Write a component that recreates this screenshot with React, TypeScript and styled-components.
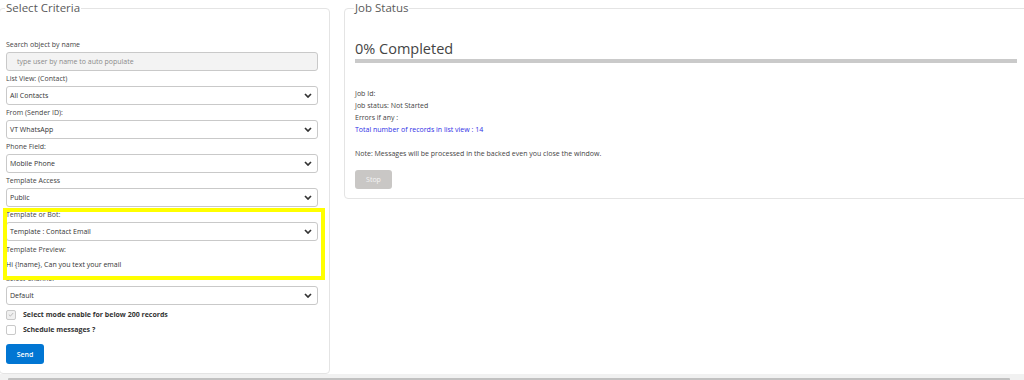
import React from 'react';
import styled, { createGlobalStyle } from 'styled-components';

const GlobalStyle = createGlobalStyle`
  html, body {
    margin: 0;
    padding: 0;
    overflow: hidden;
    background: #ffffff;
  }
  body {
    font-family: "Open Sans", "Noto Sans", sans-serif;
    color: #3e3e3e;
  }
`;

const Page = styled.div`
  width: 1024px;
  height: 380px;
  overflow: hidden;
  padding-top: 1px;
  box-sizing: border-box;
`;

const PanelRow = styled.div`
  display: flex;
  align-items: flex-start;
  gap: 14px;
`;

const Panel = styled.fieldset<{ $width: number; $padLeft: number; $padRight: number }>`
  flex: none;
  width: ${(p) => p.$width}px;
  box-sizing: border-box;
  margin: 0;
  padding: 25px ${(p) => p.$padRight}px 9px ${(p) => p.$padLeft}px;
  border: 1px solid #e4e4e4;
  border-radius: 4px;
  min-width: 0;
`;

const Legend = styled.legend`
  padding: 0 1px;
  margin-left: -1px;
  font-size: 11.5px;
  line-height: 14px;
  color: #5a5a5a;
`;

const Fields = styled.div`
  position: relative;
  display: flex;
  flex-direction: column;
`;

const Label = styled.div<{ $top?: number }>`
  font-size: 7px;
  line-height: 10px;
  height: 10px;
  margin-top: ${(p) => p.$top ?? 3}px;
  margin-bottom: 2px;
  color: #444;
  white-space: nowrap;
`;

const TextInput = styled.div`
  height: 19px;
  box-sizing: border-box;
  border: 1px solid #c9c9c9;
  border-radius: 3px;
  background: #f3f3f3;
  padding-left: 10px;
  display: flex;
  align-items: center;
  font-size: 7px;
  color: #8a8a8a;
`;

const SelectBox = styled.div`
  height: 19px;
  box-sizing: border-box;
  border: 1px solid #c9c9c9;
  border-radius: 3px;
  background: #fff;
  padding: 0 5px 0 3px;
  display: flex;
  align-items: center;
  justify-content: space-between;
  font-size: 7px;
  color: #333;
`;

const PreviewText = styled.div`
  font-size: 7px;
  line-height: 10px;
  margin-top: 3px;
  color: #333;
`;

/* yellow annotation drawn over the form */
const Highlight = styled.div`
  position: absolute;
  left: -3px;
  top: 168px;
  width: 322px;
  height: 72px;
  box-sizing: border-box;
  border: 4px solid #ffff00;
  pointer-events: none;
`;

const CheckRow = styled.div<{ $top?: number }>`
  display: flex;
  align-items: center;
  gap: 7px;
  height: 15px;
  margin-top: ${(p) => p.$top ?? 0}px;
  font-size: 7px;
  font-weight: 700;
  color: #333;
`;

const CheckBox = styled.span<{ $disabled?: boolean }>`
  width: 10px;
  height: 10px;
  box-sizing: border-box;
  border: 1px solid #c9c9c9;
  border-radius: 2px;
  background: ${(p) => (p.$disabled ? '#f0f0f0' : '#fff')};
  display: flex;
  align-items: center;
  justify-content: center;
`;

const Button = styled.div<{ $tone: 'brand' | 'muted'; $width: number; $height: number }>`
  width: ${(p) => p.$width}px;
  height: ${(p) => p.$height}px;
  border-radius: 3px;
  background: ${(p) => (p.$tone === 'brand' ? '#0176d3' : '#c9c7c5')};
  color: ${(p) => (p.$tone === 'brand' ? '#fff' : '#f4f4f4')};
  display: flex;
  align-items: center;
  justify-content: center;
  font-size: 7px;
  font-weight: ${(p) => (p.$tone === 'brand' ? 600 : 400)};
  margin-top: ${(p) => (p.$tone === 'brand' ? 7 : 10)}px;
`;

const Heading = styled.div`
  font-size: 14.5px;
  line-height: 18px;
  color: #444;
`;

const Progress = styled.div`
  height: 4px;
  margin-top: 1px;
  background: #cacaca;
`;

const InfoList = styled.div`
  margin-top: 25px;
  display: flex;
  flex-direction: column;
`;

const InfoLine = styled.div<{ $accent?: boolean }>`
  font-size: 7px;
  line-height: 12px;
  color: ${(p) => (p.$accent ? '#2f2fe6' : '#444')};
`;

const Note = styled.div`
  margin-top: 12px;
  font-size: 7px;
  line-height: 12px;
  color: #444;
`;

const ScrollTrack = styled.div`
  height: 10px;
  background: #f1f1f1;
  padding-top: 4px;
  box-sizing: border-box;
`;

const ScrollThumb = styled.div`
  margin-left: 8px;
  width: 1002px;
  height: 6px;
  background: #c1c1c1;
  border-radius: 1px;
`;

const Chevron = () => (
  <svg width="8" height="5" viewBox="0 0 8 5">
    <path d="M1 1l3 3 3-3" fill="none" stroke="#333" strokeWidth="1.7" />
  </svg>
);

const Tick = () => (
  <svg width="6" height="5" viewBox="0 0 6 5">
    <path d="M0.8 2.6l1.6 1.5L5.2 1" fill="none" stroke="#b5b5b5" strokeWidth="0.9" />
  </svg>
);

const selects = [
  { label: 'List View: (Contact)', value: 'All Contacts' },
  { label: 'From (Sender ID):', value: 'VT WhatsApp' },
  { label: 'Phone Field:', value: 'Mobile Phone' },
  { label: 'Template Access', value: 'Public' },
  { label: 'Template or Bot:', value: 'Template : Contact Email' },
];

const SelectCriteria = () => (
  <Panel $width={331} $padLeft={6} $padRight={11} style={{ marginLeft: -1 }}>
    <Legend>Select Criteria</Legend>
    <Fields>
      <Label $top={0}>Search object by name</Label>
      <TextInput>type user by name to auto populate</TextInput>
      {selects.map((s) => (
        <React.Fragment key={s.label}>
          <Label>{s.label}</Label>
          <SelectBox>
            <span>{s.value}</span>
            <Chevron />
          </SelectBox>
        </React.Fragment>
      ))}
      <Label $top={4}>Template Preview:</Label>
      <PreviewText>Hi {'{!name}'}, Can you text your email</PreviewText>
      <Label $top={4}>Select Channel</Label>
      <SelectBox>
        <span>Default</span>
        <Chevron />
      </SelectBox>
      <CheckRow $top={2}>
        <CheckBox $disabled>
          <Tick />
        </CheckBox>
        Select mode enable for below 200 records
      </CheckRow>
      <CheckRow>
        <CheckBox />
        Schedule messages ?
      </CheckRow>
      <Button $tone="brand" $width={38} $height={20}>
        Send
      </Button>
      <Highlight />
    </Fields>
  </Panel>
);

const JobStatus = () => (
  <Panel $width={684} $padLeft={10} $padRight={10}>
    <Legend>Job Status</Legend>
    <Heading>0% Completed</Heading>
    <Progress />
    <InfoList>
      <InfoLine>Job Id:</InfoLine>
      <InfoLine>Job status: Not Started</InfoLine>
      <InfoLine>Errors if any :</InfoLine>
      <InfoLine $accent>Total number of records in list view : 14</InfoLine>
    </InfoList>
    <Note>Note: Messages will be processed in the backed even you close the window.</Note>
    <Button $tone="muted" $width={37} $height={19}>
      Stop
    </Button>
  </Panel>
);

const App = () => (
  <>
    <GlobalStyle />
    <Page>
      <PanelRow>
        <SelectCriteria />
        <JobStatus />
      </PanelRow>
      <ScrollTrack>
        <ScrollThumb />
      </ScrollTrack>
    </Page>
  </>
);

export default App;
